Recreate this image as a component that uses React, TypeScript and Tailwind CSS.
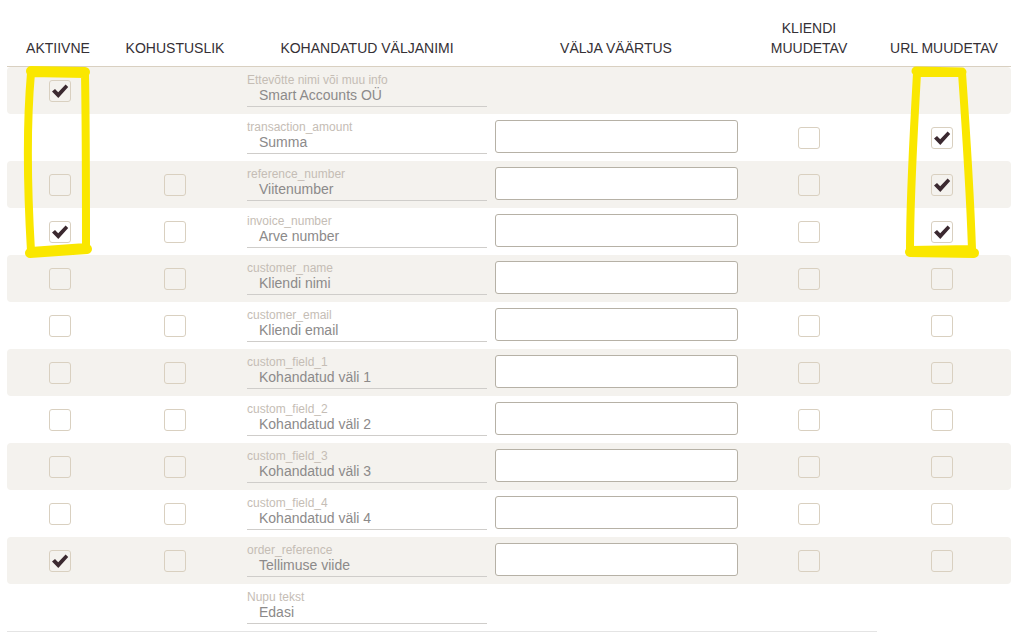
type Row = {
  label: string;
  value: string;
  active?: boolean | null;
  required?: boolean | null;
  input: boolean;
  client?: boolean | null;
  url?: boolean | null;
};

const rows: Row[] = [
  { label: 'Ettevõtte nimi või muu info', value: 'Smart Accounts OÜ', active: true, required: null, input: false, client: null, url: null },
  { label: 'transaction_amount', value: 'Summa', active: null, required: null, input: true, client: false, url: true },
  { label: 'reference_number', value: 'Viitenumber', active: false, required: false, input: true, client: false, url: true },
  { label: 'invoice_number', value: 'Arve number', active: true, required: false, input: true, client: false, url: true },
  { label: 'customer_name', value: 'Kliendi nimi', active: false, required: false, input: true, client: false, url: false },
  { label: 'customer_email', value: 'Kliendi email', active: false, required: false, input: true, client: false, url: false },
  { label: 'custom_field_1', value: 'Kohandatud väli 1', active: false, required: false, input: true, client: false, url: false },
  { label: 'custom_field_2', value: 'Kohandatud väli 2', active: false, required: false, input: true, client: false, url: false },
  { label: 'custom_field_3', value: 'Kohandatud väli 3', active: false, required: false, input: true, client: false, url: false },
  { label: 'custom_field_4', value: 'Kohandatud väli 4', active: false, required: false, input: true, client: false, url: false },
  { label: 'order_reference', value: 'Tellimuse viide', active: true, required: false, input: true, client: false, url: false },
  { label: 'Nupu tekst', value: 'Edasi', active: null, required: null, input: false, client: null, url: null },
];

const cols = 'grid grid-cols-[106px_124px_250px_258px_128px_138px]';

function Check({ value }: { value?: boolean | null }) {
  if (value === null || value === undefined) return null;
  return (
    <div className="relative w-[22px] h-[22px] rounded-[3px] border border-[#d9d0c0]">
      {value && (
        <svg className="absolute -top-px -left-px" width="22" height="22" viewBox="0 0 22 22">
          <path d="M3 11.6 L6 8.9 L9.2 12.2 L16.6 4.6 L19.2 7.1 L9.3 18 Z" fill="#3b2930" />
        </svg>
      )}
    </div>
  );
}

export default function App() {
  return (
    <div className="relative w-[1021px] h-[637px] bg-white overflow-hidden font-['Liberation_Sans',Arial,sans-serif]">
      <div className="ml-[7px] w-[1004px]">
        <div className={`${cols} h-[67px] border-b border-[#d9d0c1] items-end pb-[8px] text-[14px] leading-[20px] text-[#353035] uppercase`}>
          <div className="text-center pr-[4px]">Aktiivne</div>
          <div className="text-center">Kohustuslik</div>
          <div className="text-center pl-[10px]">Kohandatud väljanimi</div>
          <div className="text-center">Välja väärtus</div>
          <div className="text-center">Kliendi<br />muudetav</div>
          <div className="text-center pl-[4px]">URL muudetav</div>
        </div>

        {rows.map((r, i) => (
          <div
            key={r.label}
            className={`${cols} h-[47px] rounded-[4px] ${i % 2 === 0 && i < 11 ? 'bg-[#f4f2ee]' : ''}`}
          >
            <div className="flex justify-center pt-[13px]">
              <Check value={r.active} />
            </div>
            <div className="flex justify-center pt-[13px]">
              <Check value={r.required} />
            </div>
            <div className="pl-[10px] pt-[6px]">
              <div className="w-[240px] border-b border-[#cfcdca]">
                <div className="text-[12px] leading-[14px] text-[#c5bdb5] whitespace-nowrap">{r.label}</div>
                <div className="text-[14px] leading-[17px] pb-[2px] pl-[12px] text-[#8c8a8a]">{r.value}</div>
              </div>
            </div>
            <div className="pl-[8px] pt-[6px]">
              {r.input && (
                <div className="w-[243px] h-[33px] bg-white border border-[#b6b1a6] rounded-[3px]" />
              )}
            </div>
            <div className="flex justify-center pt-[13px]">
              <Check value={r.client} />
            </div>
            <div className="flex justify-center pt-[13px]">
              <Check value={r.url} />
            </div>
          </div>
        ))}

        <div className="w-[870px] border-t border-[#e4e4e4]" />
      </div>

      <svg
        className="absolute top-0 left-0 pointer-events-none"
        width="1021"
        height="637"
        viewBox="0 0 1021 637"
      >
        <g fill="none" stroke="#fae700" strokeLinejoin="round" strokeLinecap="round">
          <path d="M31 73 L85 74 C86 130 86 190 86 247 L31 251 C28 200 26 130 31 73 Z" strokeWidth="8" />
          <path d="M31 71 L85 72" strokeWidth="10" />
          <path d="M30 253 L87 249" strokeWidth="10" />
          <path d="M917 73 L962 73 C966 130 970 190 972 249 L910 250 C910 190 914 130 917 73 Z" strokeWidth="8" />
          <path d="M916 71 L962 72" strokeWidth="9" />
          <path d="M910 252 L974 253" strokeWidth="10" />
        </g>
      </svg>
    </div>
  );
}
